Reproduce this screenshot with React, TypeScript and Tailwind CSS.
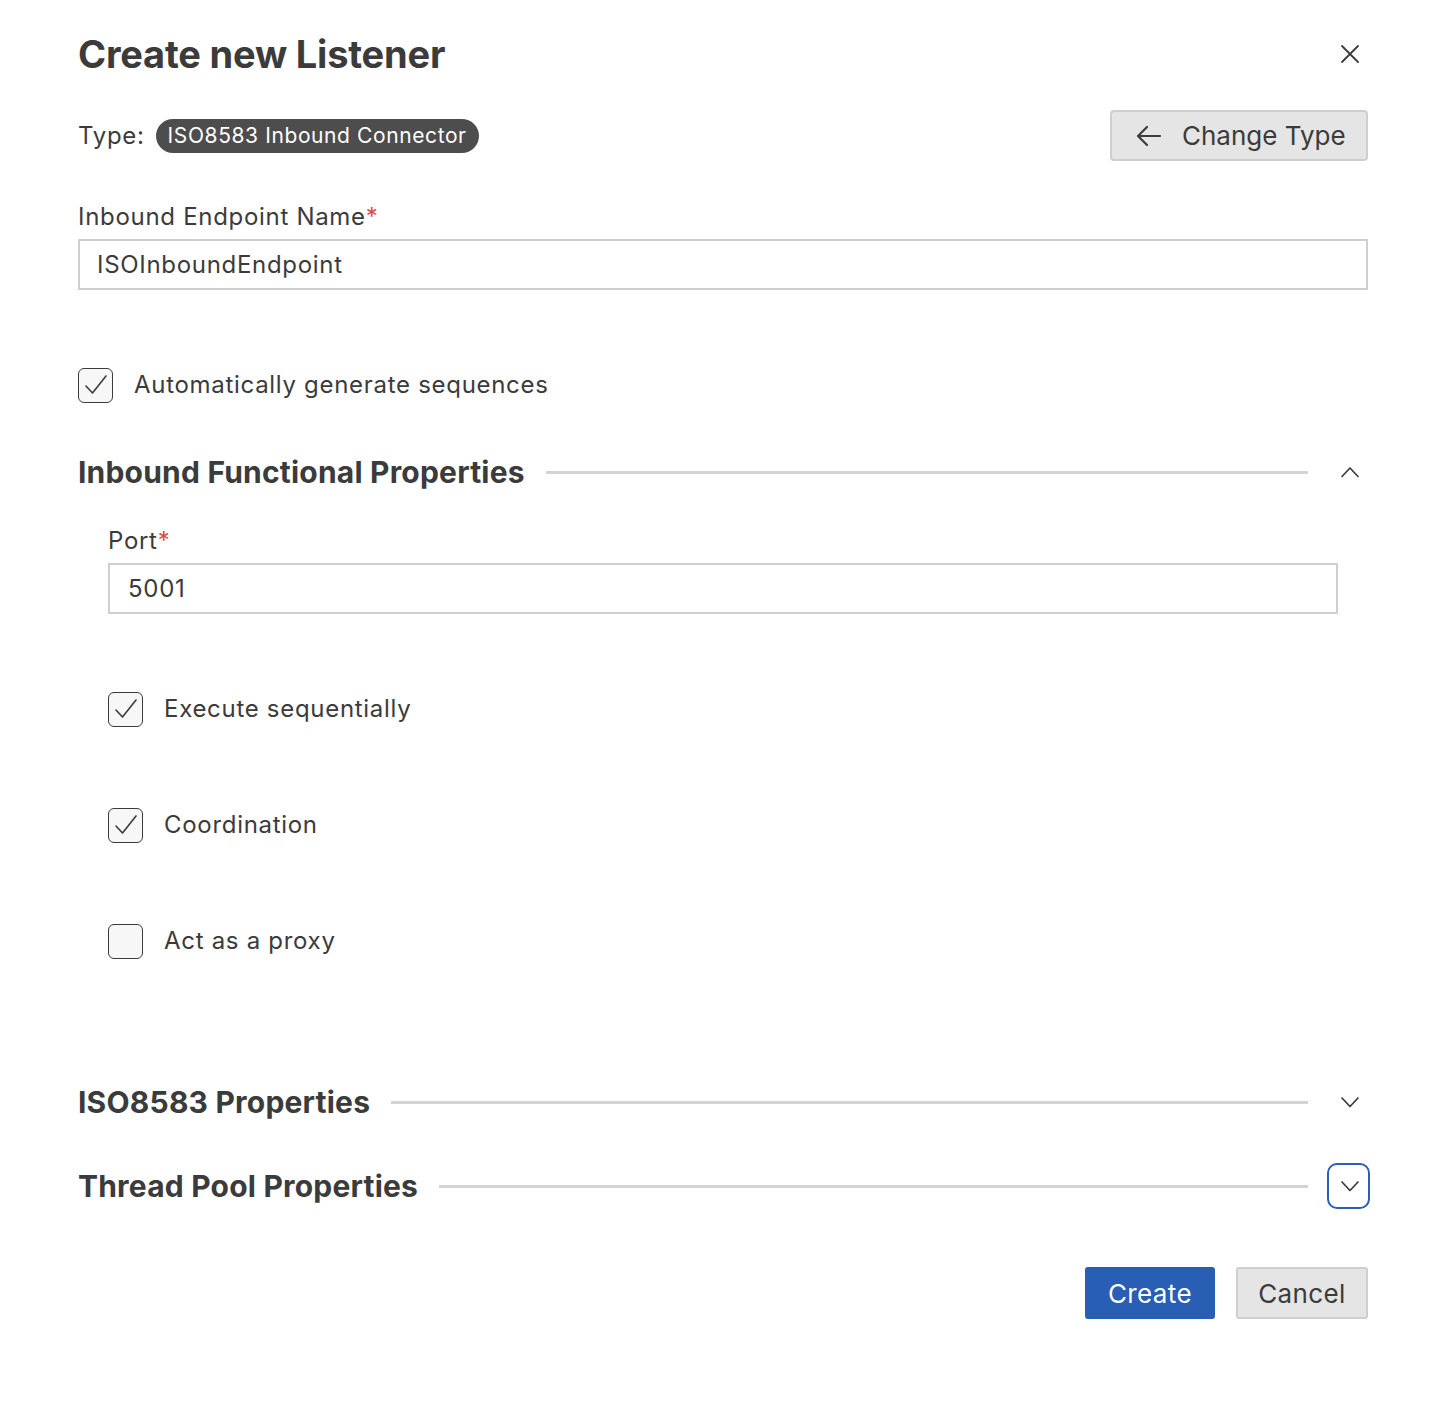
import { useState } from "react";

function Check({ on }: { on: boolean }) {
  return (
    <div className="w-[35px] h-[35px] rounded-[6px] border-[1.5px] border-[#3b3b3b] bg-[#f7f7f7] flex items-center justify-center shrink-0">
      {on && (
        <svg width="28" height="28" viewBox="0 0 28 28" fill="none">
          <path d="M4 15l6.5 7L24 5" stroke="#3b3b3b" strokeWidth="1.6" strokeLinecap="round" strokeLinejoin="round" />
        </svg>
      )}
    </div>
  );
}

function Chevron({ up }: { up?: boolean }) {
  return (
    <svg width="22" height="14" viewBox="0 0 22 14" fill="none" className="ml-[3px]">
      <path
        d={up ? "M3 11.5L11 3l8 8.5" : "M3 3l8 8.5L19 3"}
        stroke="#3b3b3b"
        strokeWidth="1.7"
        strokeLinecap="round"
        strokeLinejoin="round"
      />
    </svg>
  );
}

function Section({
  title,
  open,
  focused,
}: {
  title: string;
  open?: boolean;
  focused?: boolean;
}) {
  return (
    <div className="flex items-center h-[46px]">
      <h2 className="text-[30px] font-bold text-[#3b3b3b] whitespace-nowrap tracking-[0.2px]">{title}</h2>
      <div className="flex-1 h-[3px] bg-[#d4d4d4] ml-[21px] mr-[19px]" />
      <button
        className={
          "w-[43px] h-[46px] rounded-[10px] flex items-center justify-center mr-[-2px] " +
          (focused ? "border-2 border-[#2b5fb4]" : "border-2 border-transparent")
        }
      >
        <Chevron up={open} />
      </button>
    </div>
  );
}

export default function App() {
  const [name, setName] = useState("ISOInboundEndpoint");
  const [port, setPort] = useState("5001");

  return (
    <div
      className="w-[1452px] min-h-[1404px] bg-white text-[#3b3b3b] pl-[78px] pr-[84px] pt-[28px] tracking-[0.7px]"
      style={{ fontFamily: "Inter, 'Noto Sans', sans-serif" }}
    >
      <div className="flex items-center justify-between h-[52px]">
        <h1 className="text-[38px] font-bold tracking-[-0.2px]">Create new Listener</h1>
        <svg width="20" height="20" viewBox="0 0 20 20" className="mr-[8px]">
          <path d="M2 2l16 16M18 2L2 18" stroke="#3b3b3b" strokeWidth="1.8" strokeLinecap="round" />
        </svg>
      </div>

      <div className="flex items-center justify-between mt-[30px]">
        <div className="flex items-center gap-[11px]">
          <span className="text-[24px]">Type:</span>
          <span className="bg-[#4d4d4d] text-white text-[21px] tracking-[0.6px] rounded-full px-[12px] h-[34px] flex items-center">
            ISO8583 Inbound Connector
          </span>
        </div>
        <button className="w-[258px] h-[51px] bg-[#e5e5e5] border-2 border-[#cfcfcf] rounded-[4px] flex items-center pl-[24px] gap-[20px] text-[26px] tracking-[0px] text-[#3b3b3b]">
          <svg width="26" height="22" viewBox="0 0 26 22" fill="none">
            <path d="M24 11H3M11 2L2 11l9 9" stroke="#3b3b3b" strokeWidth="2.2" strokeLinecap="round" strokeLinejoin="round" />
          </svg>
          Change Type
        </button>
      </div>

      <label className="block text-[24px] mt-[40px] leading-[32px]">
        Inbound Endpoint Name<span className="text-[#e5483f]">*</span>
      </label>
      <input
        value={name}
        onChange={(e) => setName(e.target.value)}
        className="mt-[6px] w-full h-[51px] border-2 border-[#cfcfcf] px-[17px] text-[24px] tracking-[0.7px] text-[#3b3b3b] outline-none"
      />

      <div className="flex items-center gap-[21px] mt-[77px]">
        <Check on />
        <span className="text-[24px]">Automatically generate sequences</span>
      </div>

      <div className="mt-[46px]">
        <Section title="Inbound Functional Properties" open />
      </div>

      <div className="pl-[30px] pr-[30px]">
        <label className="block text-[24px] mt-[30px] leading-[32px]">
          Port<span className="text-[#e5483f]">*</span>
        </label>
        <input
          value={port}
          onChange={(e) => setPort(e.target.value)}
          className="mt-[6px] w-full h-[51px] border-2 border-[#cfcfcf] px-[18px] text-[24px] tracking-[0.7px] text-[#3b3b3b] outline-none"
        />

        <div className="flex flex-col gap-[80px] mt-[77px]">
          <div className="flex items-center gap-[21px] h-[36px]">
            <Check on />
            <span className="text-[24px]">Execute sequentially</span>
          </div>
          <div className="flex items-center gap-[21px] h-[36px]">
            <Check on />
            <span className="text-[24px]">Coordination</span>
          </div>
          <div className="flex items-center gap-[21px] h-[36px]">
            <Check on={false} />
            <span className="text-[24px]">Act as a proxy</span>
          </div>
        </div>
      </div>

      <div className="mt-[120px] flex flex-col gap-[38px]">
        <Section title="ISO8583 Properties" />
        <Section title="Thread Pool Properties" focused />
      </div>

      <div className="flex justify-end gap-[21px] mt-[58px]">
        <button className="w-[130px] h-[52px] bg-[#285eb3] border-2 border-[#285eb3] rounded-[3px] text-white text-[26px] tracking-[0.4px]">
          Create
        </button>
        <button className="w-[132px] h-[52px] bg-[#e5e5e5] border-2 border-[#cfcfcf] rounded-[3px] text-[#3b3b3b] text-[26px] tracking-[0.4px]">
          Cancel
        </button>
      </div>
    </div>
  );
}
